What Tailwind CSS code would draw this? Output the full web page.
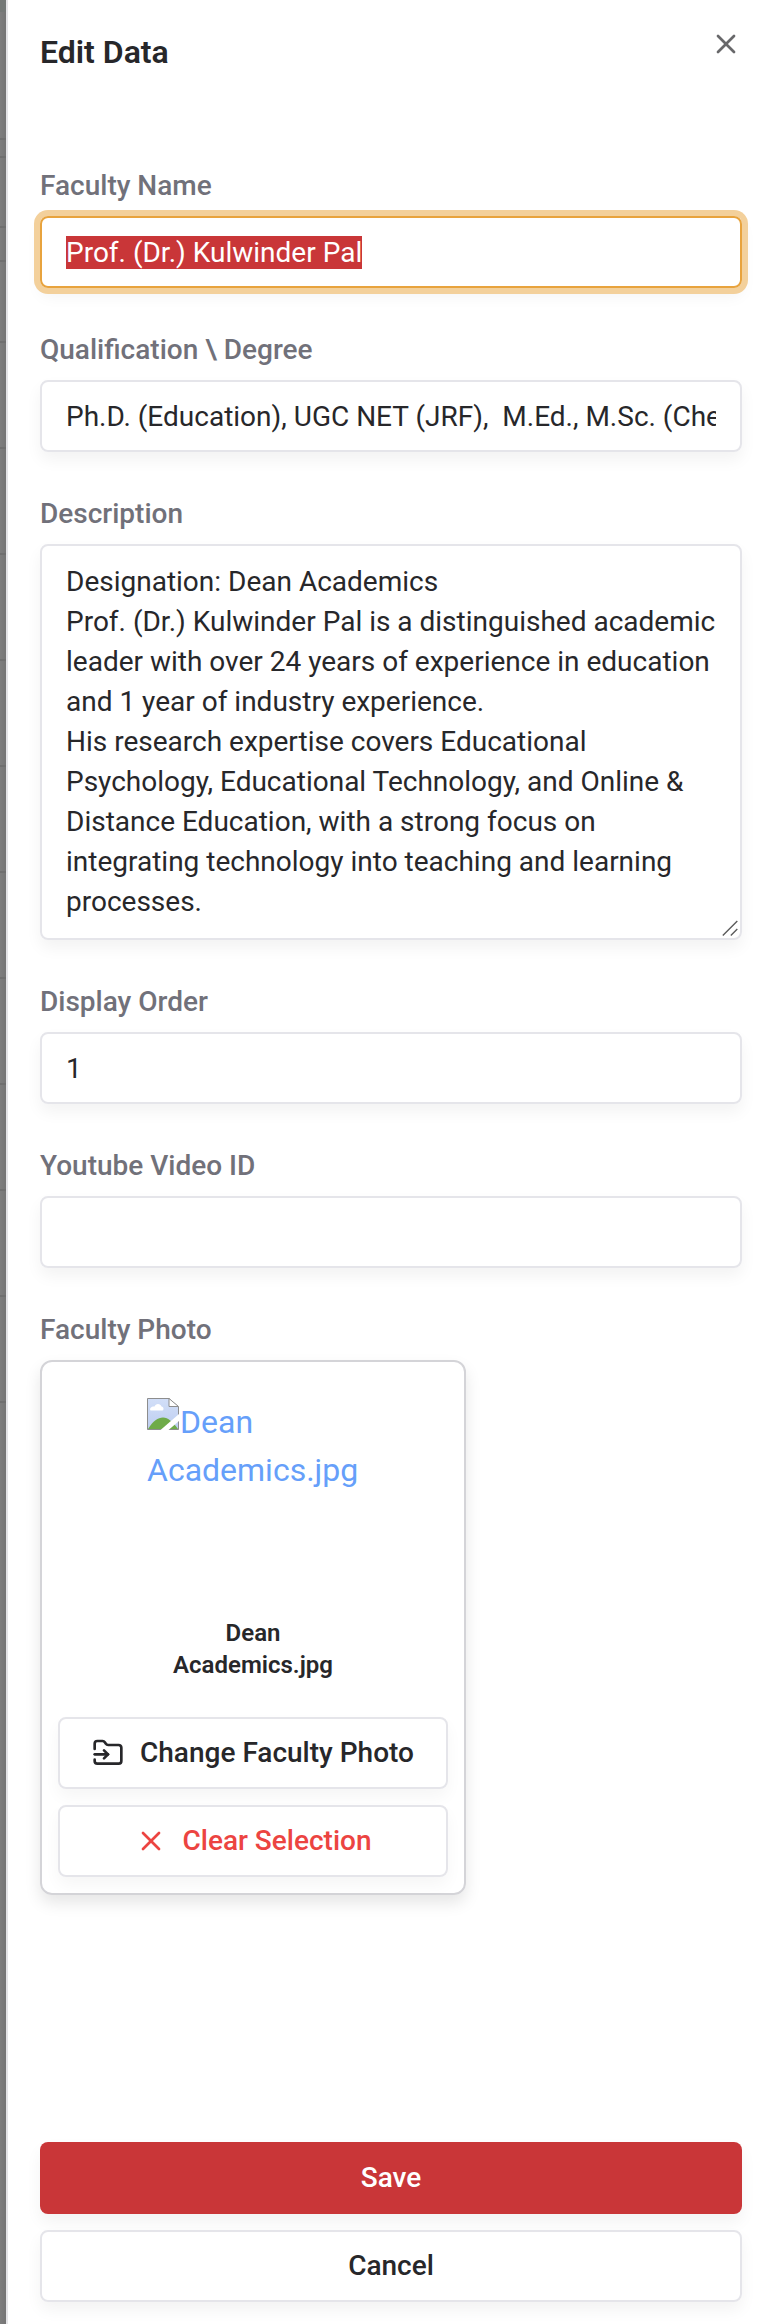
<!DOCTYPE html>
<html lang="en">
<head>
<meta charset="utf-8">
<title>Edit Data</title>
<script src="https://cdn.jsdelivr.net/npm/@tailwindcss/browser@4"></script>
</head>
<body class="flex h-[2324px] w-[766px] overflow-hidden bg-white font-[Roboto,sans-serif] text-[28px] text-[#27272a]">
  <aside class="flex w-1.5 shrink-0 flex-col bg-linear-to-r from-[#7e7e7e] to-[#757575]">
    <div class="h-3 bg-[#747876]"></div>
    <div class="mt-[126px] h-0.5 bg-[#6f6f6f]"></div>
    <div class="mt-4 h-0.5 bg-[#6f6f6f]"></div>
    <div class="mt-[68px] h-0.5 bg-[#6f6f6f]"></div>
    <div class="mt-8 h-0.5 bg-[#6f6f6f]"></div>
    <div class="mt-[79px] h-0.5 bg-[#6f6f6f]"></div>
    <div class="mt-[104px] h-0.5 bg-[#6f6f6f]"></div>
    <div class="mt-[104px] h-0.5 bg-[#6f6f6f]"></div>
    <div class="mt-[104px] h-0.5 bg-[#6f6f6f]"></div>
    <div class="mt-[104px] h-0.5 bg-[#6f6f6f]"></div>
    <div class="mt-[104px] h-0.5 bg-[#6f6f6f]"></div>
    <div class="mt-[104px] h-0.5 bg-[#6f6f6f]"></div>
    <div class="mt-[104px] h-0.5 bg-[#6f6f6f]"></div>
    <div class="mt-[104px] h-0.5 bg-[#6f6f6f]"></div>
    <div class="mt-[104px] h-0.5 bg-[#6f6f6f]"></div>
    <div class="mt-[104px] h-0.5 bg-[#6f6f6f]"></div>
  </aside>
  <main class="flex flex-1 flex-col border-l-2 border-[#e4e4e7] pr-6 pb-[22px] pl-8">
    <header class="flex h-[172px] items-start justify-between">
      <h2 class="pt-7 text-[32px] leading-[48px] font-semibold">Edit Data</h2>
      <svg class="mt-7 size-8 text-[#68686a]" viewBox="0 0 24 24" fill="none" stroke="currentColor" stroke-width="2" stroke-linecap="round" stroke-linejoin="round"><path d="M18 6 6 18"/><path d="m6 6 12 12"/></svg>
    </header>
    <section class="flex flex-col gap-12">
      <div class="flex flex-col gap-4">
        <label class="leading-7 font-medium text-[#71717a]">Faculty Name</label>
        <div class="flex h-[72px] items-center rounded-lg border-2 border-[#e8a33d] px-6 shadow-[0_0_0_6px_#f3d09b,0_8px_16px_rgba(0,0,0,0.05)]"><span class="bg-[#c93638] leading-[33px] text-white">Prof. (Dr.) Kulwinder Pal</span></div>
      </div>
      <div class="flex flex-col gap-4">
        <label class="leading-7 font-medium text-[#71717a]">Qualification \ Degree</label>
        <div class="flex h-[72px] items-center rounded-lg border-2 border-[#e5e5ea] px-6 pt-0.5 shadow-[0_8px_16px_rgba(0,0,0,0.05)]"><span class="w-[650px] overflow-hidden leading-10 whitespace-pre">Ph.D. (Education), UGC NET (JRF),  M.Ed., M.Sc. (Che</span></div>
      </div>
      <div class="flex flex-col gap-4">
        <label class="leading-7 font-medium text-[#71717a]">Description</label>
        <div class="relative h-[396px] rounded-lg border-2 border-[#e5e5ea] px-6 py-4 leading-10 whitespace-nowrap shadow-[0_8px_16px_rgba(0,0,0,0.05)]">Designation: Dean Academics<br>Prof. (Dr.) Kulwinder Pal is a distinguished academic<br>leader with over 24 years of experience in education<br>and 1 year of industry experience.<br>His research expertise covers Educational<br>Psychology, Educational Technology, and Online &amp;<br>Distance Education, with a strong focus on<br>integrating technology into teaching and learning<br>processes.
          <svg class="absolute right-0.5 bottom-0.5 size-4" viewBox="0 0 16 16" stroke="#5c5c5c" stroke-width="1.4" fill="none"><path d="M.8 15.5 15.3 1M8.8 15.5 15.3 9"/></svg>
        </div>
      </div>
      <div class="flex flex-col gap-4">
        <label class="leading-7 font-medium text-[#71717a]">Display Order</label>
        <div class="flex h-[72px] items-center rounded-lg border-2 border-[#e5e5ea] px-6 pt-0.5 shadow-[0_8px_16px_rgba(0,0,0,0.05)]">1</div>
      </div>
      <div class="flex flex-col gap-4">
        <label class="leading-7 font-medium text-[#71717a]">Youtube Video ID</label>
        <div class="h-[72px] rounded-lg border-2 border-[#e5e5ea] shadow-[0_8px_16px_rgba(0,0,0,0.05)]"></div>
      </div>
      <div class="flex flex-col gap-4">
        <label class="leading-7 font-medium text-[#71717a]">Faculty Photo</label>
        <div class="flex h-[535px] w-[426px] flex-col rounded-xl border-2 border-[#d4d4d8] px-4 pb-4 shadow-[0_8px_16px_rgba(0,0,0,0.1)]">
          <div class="ml-[89px] h-[255px] pt-9 text-[32px] leading-[48px] text-[#669ffa]">
            <div class="flex">
              <svg class="size-8 shrink-0" viewBox="0 0 32 32">
                <defs><linearGradient id="sky" x1="0" y1="0" x2="0" y2="1"><stop offset="0" stop-color="#d2dff8"/><stop offset="1" stop-color="#bdcdf0"/></linearGradient></defs>
                <path d="M.5.5H22l9.500 8.500V31.500H.5Z" fill="url(#sky)"/>
                <path d="M1 31C6 23 11 19.500 16 19.500S26 24 31 31Z" fill="#6fab49"/>
                <path d="M3.500 12.500C2 10 5 8 7.500 8.500C8.500 5 13.500 5 14.500 8.500C17 9 17 12 15.500 12.500Z" fill="#fff"/>
                <path d="M.5.5H22l9.500 8.500V31.500H.5Z" fill="none" stroke="#8d8d8d"/>
                <path d="M22 .5V8.500H31.500Z" fill="#fff" stroke="#8d8d8d"/>
                <path d="M32 16 13.500 32H21.500L32 23Z" fill="#fff"/>
              </svg><span class="ml-px">Dean</span>
            </div>
            <div>Academics.jpg</div>
          </div>
          <div class="h-[100px] text-center text-2xl leading-8 font-semibold">Dean<br>Academics.jpg</div>
          <div class="flex h-[72px] shrink-0 items-center justify-center gap-4 rounded-lg border-2 border-[#e5e5ea] font-medium shadow-[0_8px_16px_rgba(0,0,0,0.04)]">
            <svg class="size-8" viewBox="0 0 24 24" fill="none" stroke="currentColor" stroke-width="2" stroke-linecap="round" stroke-linejoin="round"><path d="M2 9V5a2 2 0 0 1 2-2h3.900a2 2 0 0 1 1.690.9l.81 1.200a2 2 0 0 0 1.670.9H20a2 2 0 0 1 2 2v10a2 2 0 0 1-2 2H4a2 2 0 0 1-2-2v-1"/><path d="M2 13h10"/><path d="m9 16 3-3-3-3"/></svg>
            <span>Change Faculty Photo</span>
          </div>
          <div class="mt-4 flex h-[72px] shrink-0 items-center justify-center gap-4 rounded-lg border-2 border-[#e5e5ea] font-medium text-[#ec4441] shadow-[0_8px_16px_rgba(0,0,0,0.04)]">
            <svg class="size-8" viewBox="0 0 24 24" fill="none" stroke="currentColor" stroke-width="2" stroke-linecap="round" stroke-linejoin="round"><path d="M18 6 6 18"/><path d="m6 6 12 12"/></svg>
            <span>Clear Selection</span>
          </div>
        </div>
      </div>
    </section>
    <footer class="mt-auto flex flex-col gap-4 font-medium">
      <div class="flex h-[72px] items-center justify-center rounded-lg bg-[#c93638] text-white shadow-[0_8px_16px_rgba(0,0,0,0.05)]">Save</div>
      <div class="flex h-[72px] items-center justify-center rounded-lg border-2 border-[#e5e5ea] shadow-[0_8px_16px_rgba(0,0,0,0.05)]">Cancel</div>
    </footer>
  </main>
</body>
</html>
